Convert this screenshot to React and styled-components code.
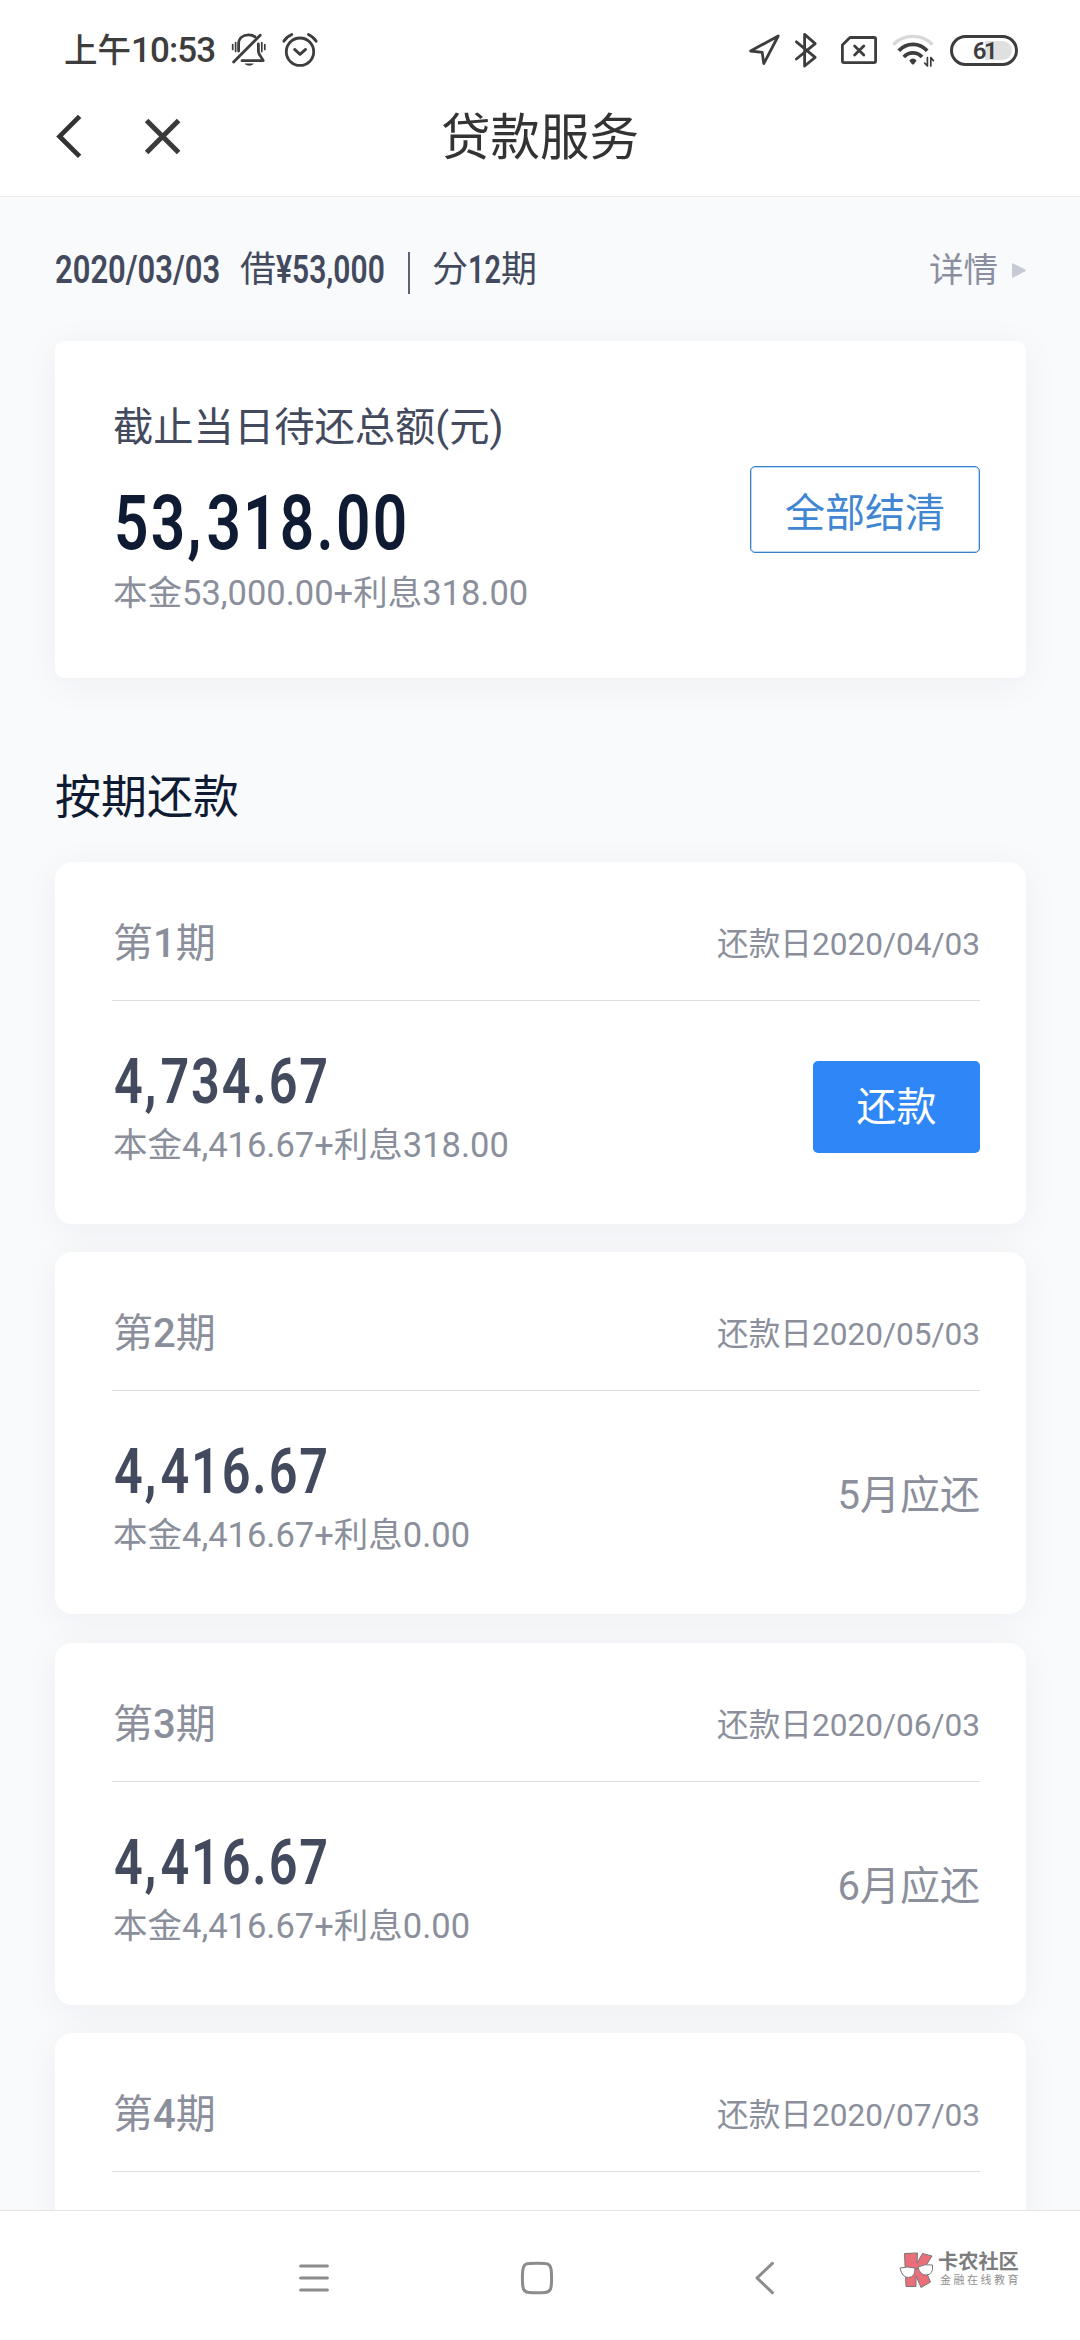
import styled, { createGlobalStyle } from 'styled-components';

const GlobalStyle = createGlobalStyle`
    * { box-sizing: border-box; }
    body {
        margin: 0;
        background: #fff;
        font-family: Roboto, "Noto Sans CJK SC", sans-serif;
    }
    button {
        font-family: inherit;
        padding: 0;
        cursor: pointer;
    }
    svg { display: block; flex: none; }
`

const Screen = styled.div`
    width: 1080px;
    height: 2340px;
    display: flex;
    flex-direction: column;
    overflow: hidden;
`

/* ---- 状态栏 ---- */
const StatusBar = styled.div`
    height: 80px;
    padding: 20px 62px 0 64px;
    display: flex;
    align-items: center;
    justify-content: space-between;
    color: #3d3d3d;
`

const StatusGroup = styled.div`
    height: 60px;
    display: flex;
    align-items: center;
`

const Clock = styled.span`
    width: 151px;
    margin: 2px 15px 0 0;
    font-size: 33.5px;
    line-height: 60px;
    font-weight: 500;
    white-space: nowrap;
`

const ClockDigits = styled.span`
    font-size: 35px;
    letter-spacing: -0.9px;
`

const StatusIcon = styled.svg`
    margin-left: ${props => props.$gap || 0}px;
    fill: none;
    stroke: #3d3d3d;
    stroke-width: 2.8;
    stroke-linecap: round;
    stroke-linejoin: round;
`

const Battery = styled.div`
    width: 68px;
    height: 31px;
    margin-left: 14px;
    border: 3px solid #3d3d3d;
    border-radius: 16px;
    padding: 3px;
`

const BatteryLevel = styled.div`
    height: 19px;
    border-radius: 10px;
    background: linear-gradient(to right, #fff 52%, #e0e0e0 52%);
    font-size: 24px;
    line-height: 20px;
    font-weight: 600;
    letter-spacing: -2.4px;
    text-align: center;
`

/* ---- 标题栏 ---- */
const Header = styled.header`
    height: 117px;
    padding: 0 54px;
    display: grid;
    grid-template-columns: 1fr auto 1fr;
    align-items: center;
    border-bottom: 1px solid #ececec;
`

const HeaderActions = styled.div`
    display: flex;
    gap: 58px;
    padding-bottom: 5px;
`

const Title = styled.h1`
    margin: 0;
    font-size: 49.5px;
    line-height: 60px;
    font-weight: 400;
    color: #333;
`

/* ---- 内容 ---- */
const Content = styled.main`
    flex: 1;
    min-height: 0;
    overflow: hidden;
    padding: 0 54px 0 55px;
    background: #f9fafc;
`

const SummaryRow = styled.div`
    height: 144px;
    padding-top: 2px;
    display: flex;
    align-items: center;
    justify-content: space-between;
`

const SummaryText = styled.div`
    display: flex;
    align-items: center;
    font-size: 36px;
    line-height: 50px;
    color: #434a5e;
`

const NarrowBox = styled.span`
    width: ${props => props.$width}px;
    display: block;
    white-space: nowrap;
`

const NarrowText = styled.span`
    display: inline-block;
    font-size: 38px;
    font-weight: 600;
    transform: scaleX(${props => props.$scale});
    transform-origin: left center;
`

const Label = styled.span`
    margin-left: ${props => props.$gap || 0}px;
`

const Divider = styled.span`
    width: 2px;
    height: 42px;
    margin: 5px 22px 0 23px;
    background: #5a6178;
`

const DetailLink = styled.a`
    display: flex;
    align-items: center;
    gap: 14px;
    font-size: 34.5px;
    line-height: 50px;
    color: #8a8f9f;
`

const Card = styled.section`
    background: #fff;
    border-radius: ${props => props.$radius}px;
    box-shadow: 0 6px 36px rgba(30, 40, 60, 0.05);
`

const TotalCard = styled(Card)`
    height: 337px;
    padding: 62px 46px 0 58px;
    display: flex;
    justify-content: space-between;
`

const TotalLabel = styled.div`
    font-size: 40.3px;
    line-height: 50px;
    color: #434a5e;
`

const AmountBox = styled.div`
    margin: ${props => props.$total ? 30 : 0}px 0 0 1px;
    font-size: ${props => props.$total ? 75.5 : 63}px;
    line-height: ${props => props.$total ? 80 : 64}px;
    font-weight: 600;
    letter-spacing: 0.036em;
    color: ${props => props.$total ? '#0f1a33' : '#434a5e'};
    white-space: nowrap;
    transform: scaleX(0.8);
    transform-origin: left center;
`

const Separator = styled.span`
    letter-spacing: ${props => props.$comma ? 0.08 : 0.04}em;
`

const Breakdown = styled.div`
    margin-top: ${props => props.$gap}px;
    font-size: 34.5px;
    line-height: 40px;
    color: #8a8f9b;
`

const SettleButton = styled.button`
    width: 230px;
    height: 87px;
    margin-top: 63px;
    border: 1px solid #3a80c8;
    border-radius: 5px;
    box-shadow: inset 0 0 0 1px #b9d8f5;
    background: #fff;
    font-size: 40px;
    color: #3f86d3;
`

const SectionTitle = styled.h2`
    margin: 89px 0 35px;
    font-size: 46px;
    line-height: 60px;
    font-weight: 400;
    color: #0f1a33;
`

const PeriodCard = styled(Card)`
    height: 362px;
    margin-bottom: 28.33px;
    padding: 0 46px 0 57px;
`

const PeriodHead = styled.div`
    height: 139px;
    padding-top: 20px;
    display: flex;
    align-items: center;
    justify-content: space-between;
    border-bottom: 1px solid #dddee1;
    color: #8a8f9b;
`

const PeriodName = styled.div`
    margin: 0 0 2px 1px;
    font-size: 40px;
    b { font-weight: 500; }
`

const DueDate = styled.div`
    font-size: 31.6px;
`

const PeriodBody = styled.div`
    padding-top: 49px;
    display: flex;
    align-items: center;
    justify-content: space-between;
`

const PeriodInfo = styled.div`
    padding-left: 1px;
`

const RepayButton = styled.button`
    width: 167px;
    height: 92px;
    margin-bottom: 1px;
    padding-bottom: 6px;
    border: none;
    border-radius: 5px;
    background: #2f86f6;
    font-size: 40px;
    color: #fff;
`

const DueMonth = styled.div`
    margin-bottom: 3px;
    font-size: 40px;
    line-height: 50px;
    color: #8a8f9b;
`

/* ---- 底部导航 ---- */
const NavBar = styled.nav`
    height: 130px;
    padding: 4px 62px 0 297px;
    display: flex;
    align-items: center;
    border-top: 1px solid #e2e3e5;
    background: #fff;
`

const NavIcon = styled.svg`
    margin-right: ${props => props.$gap}px;
    fill: none;
    stroke: #8c8c8c;
    stroke-width: 3;
    stroke-linecap: round;
    stroke-linejoin: round;
`

const Brand = styled.div`
    display: flex;
    align-items: center;
    gap: 3px;
    margin-bottom: 16px;
`

const BrandName = styled.div`
    font-size: 20.2px;
    line-height: 20px;
    font-weight: 700;
    color: #7d7d7d;
    white-space: nowrap;
`

const BrandSlogan = styled.div`
    margin: 3px 0 0 2px;
    font-size: 11px;
    line-height: 12px;
    letter-spacing: 2.5px;
    color: #8f8f8f;
    white-space: nowrap;
`


const periods = [
    { no: 1, date: '2020/04/03', amount: '4,734.67', interest: '318.00', canPay: true },
    { no: 2, date: '2020/05/03', amount: '4,416.67', interest: '0.00', month: 5 },
    { no: 3, date: '2020/06/03', amount: '4,416.67', interest: '0.00', month: 6 },
]

// 最后一期只露出标题部分
const nextPeriod = { no: 4, date: '2020/07/03' }


// 金额,逗号和小数点后面多留一点间距
function Amount({ value, total }){
    return(
        <AmountBox $total={total}>
            {value.split(/([,.])/).map((part, idx) =>
                part === ',' || part === '.'
                    ? <Separator key={idx} $comma={part === ','}>{part}</Separator>
                    : part
            )}
        </AmountBox>
    )
}

function Narrow({ width, scale, children }){
    return(
        <NarrowBox $width={width}><NarrowText $scale={scale}>{children}</NarrowText></NarrowBox>
    )
}

function Status(){
    return(
        <StatusBar>
            <StatusGroup>
                <Clock>上午<ClockDigits>10:53</ClockDigits></Clock>
                <StatusIcon width="38" height="40" viewBox="0 0 38 40">
                    <path d="M3.6 32 L30.2 5.2" />
                    <path d="M8.6 21 V14 C8.6 8 13 4.9 18.6 4.9 C21.2 4.9 23.3 5.5 25 6.8" />
                    <path d="M28.4 14 V21.5 C29 26 32.5 28 33.2 30.7 H12" />
                    <path d="M14.6 33.6 H23.8 C22 36.4 16.4 36.4 14.6 33.6 Z" fill="#3d3d3d" stroke="none" />
                    <path d="M2.7 14.5 V19.5 M5.6 12.5 V21.5 M31.8 12.5 V21.5 M34.8 14.5 V19.5" strokeWidth="1.7" />
                </StatusIcon>
                <StatusIcon width="40" height="40" viewBox="0 0 40 40" $gap={12}>
                    <circle cx="20" cy="21.7" r="13.7" />
                    <path d="M14.6 19.4 L20 24.4 L25.6 19.4" />
                    <path d="M3.8 11.2 C5.6 8.2 8.4 6 11.8 4.5 M28.4 4.5 C31.6 6 34.4 8.2 36.2 11.2" />
                </StatusIcon>
            </StatusGroup>

            <StatusGroup>
                <StatusIcon width="34" height="34" viewBox="0 0 34 34">
                    <path d="M3.6 18 L31.2 3 L16.8 30.6 L15.2 19.4 Z" />
                </StatusIcon>
                <StatusIcon width="26" height="38" viewBox="0 0 26 38" $gap={12}>
                    <path d="M3.4 10.8 L22.2 26.4 L11.6 35 V3.4 L22.2 12.6 L3.4 28" />
                </StatusIcon>
                <StatusIcon width="40" height="32" viewBox="0 0 40 32" $gap={20}>
                    <path d="M11 3.5 H35 Q36.6 3.5 36.6 5 V27 Q36.6 28.6 35 28.6 H5 Q3.4 28.6 3.4 27 V11 Z" />
                    <path d="M15.6 12 L24.8 21 M24.8 12 L15.6 21" />
                </StatusIcon>
                <StatusIcon width="46" height="36" viewBox="0 0 46 36" $gap={11}>
                    <path d="M3.4 12.6 C13.5 1.6 32.5 1.6 42.4 12.6" stroke="#d8d8d8" strokeLinecap="butt" strokeWidth="3.4" />
                    <path d="M8.8 18.8 C16.5 10.2 29.4 10.2 37.2 18.8" strokeLinecap="butt" strokeWidth="3.8" />
                    <path d="M13.8 25 C18.6 19.6 27.2 19.6 32 25" strokeLinecap="butt" strokeWidth="3.8" />
                    <path d="M19.2 28.4 Q22.9 24.8 26.6 28.4 L24 32 Q22.9 33 21.8 32 Z" fill="#3d3d3d" stroke="none" />
                    <path d="M37.4 25.5 V34 L34.8 31.2 M40.8 34 V25.5 L43.4 28.6" strokeWidth="1.7" />
                </StatusIcon>
                <Battery><BatteryLevel>61</BatteryLevel></Battery>
            </StatusGroup>
        </StatusBar>
    )
}

function PeriodTop({ item }){
    return(
        <PeriodHead>
            <PeriodName>第<b>{item.no}</b>期</PeriodName>
            <DueDate>还款日{item.date}</DueDate>
        </PeriodHead>
    )
}

function Period({ item }){
    return(
        <PeriodCard $radius={17}>
            <PeriodTop item={item} />
            <PeriodBody>
                <PeriodInfo>
                    <Amount value={item.amount} />
                    <Breakdown $gap={11}>本金4,416.67+利息{item.interest}</Breakdown>
                </PeriodInfo>
                {item.canPay ?
                    (<RepayButton>还款</RepayButton>)
                    :
                    (<DueMonth>{item.month}月应还</DueMonth>)
                }
            </PeriodBody>
        </PeriodCard>
    )
}

function App(){
    return(
        <>
            <GlobalStyle />
            <Screen>
                <Status />

                <Header>
                    <HeaderActions>
                        <svg width="30" height="48" viewBox="0 0 30 48" fill="none" stroke="#333" strokeWidth="4.8">
                            <path d="M25.6 4.4 L5.6 24.4 L25.6 44.4" />
                        </svg>
                        <svg width="42" height="48" viewBox="0 0 42 48" fill="none" stroke="#3a3a3a" strokeWidth="5">
                            <path d="M4.6 8.4 L36.6 40.4 M36.6 8.4 L4.6 40.4" />
                        </svg>
                    </HeaderActions>
                    <Title>贷款服务</Title>
                </Header>

                <Content>
                    <SummaryRow>
                        <SummaryText>
                            <Narrow width={166} scale={0.815}>2020/03/03</Narrow>
                            <Label $gap={19}>借</Label>
                            <Narrow width={109} scale={0.79}>¥53,000</Narrow>
                            <Divider />
                            <Label>分</Label>
                            <Narrow width={32} scale={0.76}>12</Narrow>
                            <Label $gap={1}>期</Label>
                        </SummaryText>
                        <DetailLink>
                            详情
                            <svg width="14" height="15" viewBox="0 0 14 15" fill="#c5cad5">
                                <path d="M0 1.2 Q0 0 1.2 0.4 L13.2 6.6 Q14 7.5 13.2 8.3 L1.2 14.6 Q0 15 0 13.8 Z" />
                            </svg>
                        </DetailLink>
                    </SummaryRow>

                    <TotalCard $radius={9}>
                        <div>
                            <TotalLabel>截止当日待还总额(元)</TotalLabel>
                            <Amount value="53,318.00" total />
                            <Breakdown $gap={10}>本金53,000.00+利息318.00</Breakdown>
                        </div>
                        <SettleButton>全部结清</SettleButton>
                    </TotalCard>

                    <SectionTitle>按期还款</SectionTitle>

                    {periods.map((item) => <Period key={item.no} item={item} />)}
                    <PeriodCard $radius={17}>
                        <PeriodTop item={nextPeriod} />
                    </PeriodCard>
                </Content>

                <NavBar>
                    <NavIcon width="34" height="36" viewBox="0 0 34 36" $gap={188}>
                        <path d="M3.6 6 H30.4 M3.6 18 H30.4 M3.6 30 H30.4" />
                    </NavIcon>
                    <NavIcon width="36" height="36" viewBox="0 0 36 36" $gap={198}>
                        <path d="M10 3.6 Q18 2.8 26 3.6 Q31.6 3.8 32.2 10 Q33 18 32.2 26 Q31.6 32.2 26 32.4 Q18 33.2 10 32.4 Q4.4 32.2 3.8 26 Q3 18 3.8 10 Q4.4 3.8 10 3.6 Z" />
                    </NavIcon>
                    <NavIcon width="24" height="36" viewBox="0 0 24 36" $gap={122}>
                        <path d="M19.4 3.4 L4 18 L19.4 32.6" />
                    </NavIcon>
                    <Brand>
                        <svg width="36" height="38" viewBox="0 0 36 38" fill="#ea6f7b" stroke="#777" strokeWidth="1">
                            <path d="M5.5 2.5 L18.5 2 L18 12 L23.5 2.5 L33 5 L25.5 17 L31.5 31 L22 36.5 L17 25 L17 35.5 L7 35.5 Z" />
                            <path d="M1 17 Q8 15 16 17 Q16.5 26 9.5 26.5 Q3 26.5 1 17 Z" fill="#fff" />
                            <path d="M19 16 Q26 12.5 33.5 14 Q34.5 23.5 27.5 24 Q21 24.5 19 16 Z" fill="#fff" />
                            <path d="M16 18 L19.5 17" />
                        </svg>
                        <div>
                            <BrandName>卡农社区</BrandName>
                            <BrandSlogan>金融在线教育</BrandSlogan>
                        </div>
                    </Brand>
                </NavBar>
            </Screen>
        </>
    )
}

export default App;
